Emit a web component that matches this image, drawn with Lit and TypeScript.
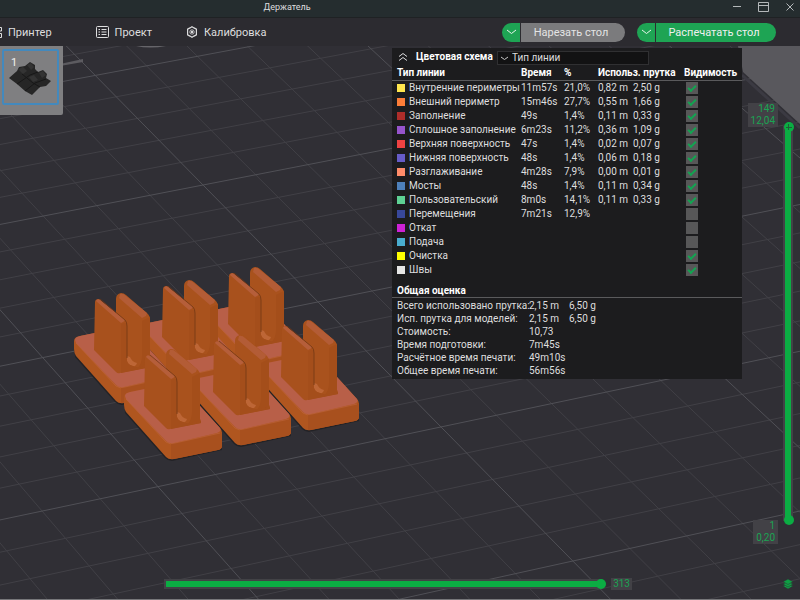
import { LitElement, html, svg, css, nothing } from "lit";
import { customElement } from "lit/decorators.js";

interface LineType {
  name: string;
  color: string;
  time?: string;
  percent?: string;
  length?: string;
  weight?: string;
  visible: boolean;
}

const LINE_TYPES: LineType[] = [
  { name: "Внутренние периметры", color: "#ffe64d", time: "11m57s", percent: "21,0%", length: "0,82 m", weight: "2,50 g", visible: true },
  { name: "Внешний периметр", color: "#fc7d38", time: "15m46s", percent: "27,7%", length: "0,55 m", weight: "1,66 g", visible: true },
  { name: "Заполнение", color: "#ad2d2a", time: "49s", percent: "1,4%", length: "0,11 m", weight: "0,33 g", visible: true },
  { name: "Сплошное заполнение", color: "#9654cc", time: "6m23s", percent: "11,2%", length: "0,36 m", weight: "1,09 g", visible: true },
  { name: "Верхняя поверхность", color: "#ee4242", time: "47s", percent: "1,4%", length: "0,02 m", weight: "0,07 g", visible: true },
  { name: "Нижняя поверхность", color: "#665cc7", time: "48s", percent: "1,4%", length: "0,06 m", weight: "0,18 g", visible: true },
  { name: "Разглаживание", color: "#ff8c69", time: "4m28s", percent: "7,9%", length: "0,00 m", weight: "0,01 g", visible: true },
  { name: "Мосты", color: "#4d80ba", time: "48s", percent: "1,4%", length: "0,11 m", weight: "0,34 g", visible: true },
  { name: "Пользовательский", color: "#5ed194", time: "8m0s", percent: "14,1%", length: "0,11 m", weight: "0,33 g", visible: true },
  { name: "Перемещения", color: "#38489b", time: "7m21s", percent: "12,9%", visible: false },
  { name: "Откат", color: "#cd22d6", visible: false },
  { name: "Подача", color: "#49adcf", visible: false },
  { name: "Очистка", color: "#ffff00", visible: true },
  { name: "Швы", color: "#e6e6e6", visible: true },
];

const TOTALS: [string, string, string][] = [
  ["Всего использовано прутка:", "2,15 m", "6,50 g"],
  ["Исп. прутка для моделей:", "2,15 m", "6,50 g"],
  ["Стоимость:", "10,73", ""],
  ["Время подготовки:", "7m45s", ""],
  ["Расчётное время печати:", "49m10s", ""],
  ["Общее время печати:", "56m56s", ""],
];

/** Perspective projection of a point on the build plate, in grid cells. */
function project(u: number, v: number): string {
  const w = 1 + 0.003 * u - 0.0065 * v;
  const x = (203 + 53.4 * u + 20.93 * v) / w;
  const y = (185 - 9.7 * u + 21.42 * v) / w;
  return `${x.toFixed(1)} ${y.toFixed(1)}`;
}

function gridPath(major: boolean): string {
  let d = "";
  for (let i = -25; i <= 35; i++) {
    if ((i % 5 === 0) !== major) continue;
    if (i <= 20) d += `M${project(i, -20)}L${project(i, 40)}`;
    d += `M${project(-25, i)}L${project(20, i)}`;
  }
  return d;
}

/** Holder copies, back to front. */
const COPIES: [number, number][] = [
  [84, -82], [18, -69], [-50, -56], [137, -29], [69, -14], [0, 0],
];

@customElement("plate-scene")
export class PlateScene extends LitElement {
  static styles = css`
    :host { display: block; }
    svg { display: block; width: 100%; height: 100%; }
    .minor { fill: none; stroke: #414046; stroke-width: 1; }
    .major { fill: none; stroke: #505056; stroke-width: 1; }
  `;

  private holder(x: number, y: number) {
    return svg`
      <g transform="translate(${x} ${y})">
        <path fill="#222226" d="M124 399 L175 386 L222 433 V450 L172 461 Q168 461 165 458 L125 413Z"/>
        <path fill="#b0561f" d="M124 397 Q124 393 130 392 L174 383 Q178 382 181 385 L220 428 Q222 430 222 433 V446 Q222 449 218 450 L174 459 Q169 460 166 457 L126 412 Q124 409 124 405Z"/>
        <path fill="#a8501e" d="M171 443 L222 432 V446 Q222 449 218 450 L174 459 Q172 459 171 459Z"/>
        <path fill="#b85f48" d="M125 396 Q125 393 130 392 L174 383 Q178 382 181 385 L220 428 Q222 431 217 433 L174 443 Q169 444 166 441 L126 399Z"/>
        <path fill="#a9521d" d="M166 355 Q166 350 171 349 Q174 349 176 351 L198 370 Q200 372 200 376 V419 L201 422 L185 426 L174 421 L166 412Z"/>
        <path fill="#a44e1a" d="M192 377 L200 373 V419 L201 422 L187 425 Q192 420 192 412Z"/>
        <path fill="#b35c36" d="M170 350 Q173 349 176 352 L197 369 L196 372 L192 374 L169 354Z"/>
        <path fill="#bd6636" d="M176 414 Q177 411 180 413 Q182 418 187 419 Q186 423 181 423 Q177 422 176 418Z"/>
        <path fill="#a8511d" d="M145 358 Q145 355 149 355 L175 377 Q177 379 177 382 V417 Q178 421 183 422 Q186 424 192 423 L201 421 L201 423 L170 429 Q168 430 166 428 L144 406Z"/>
        <path fill="#a44e1b" d="M171 380 L177 378 V417 Q178 421 183 422 Q186 424 192 423 L201 421 L201 423 L171 429Z"/>
        <path fill="#b55e3a" d="M146 357 Q147 354 150 356 L175 376 Q174 378 171 379Z"/>
        <path fill="none" stroke="#713714" stroke-width=".8" d="M150 355 L175 376 Q177 378 177 382 V414"/>
        <path fill="none" stroke="#c0673f" stroke-width=".6" d="M126 399 L166 442 Q170 445 175 443 L220 433"/>
      </g>`;
  }

  render() {
    return html`
      <svg viewBox="0 46 800 553" preserveAspectRatio="xMidYMid slice" aria-hidden="true">
        <path class="minor" d=${gridPath(false)} />
        <path class="major" d=${gridPath(true)} />
        <path fill="#59585d" d="M738 46H800V124L743 72Z" />
        <path fill="none" stroke="#3b3a42" stroke-width="3" d="M742 75L800 128" />
        <path fill="#5c5b60" d="M60 64L83 59V62L60 66Z" />
        <path fill="#66656a" d="M136 46H166Q150 49 136 46Z" />
        ${COPIES.map(([x, y]) => this.holder(x, y))}
      </svg>
    `;
  }
}

@customElement("legend-panel")
export class LegendPanel extends LitElement {
  static styles = css`
    :host {
      display: block;
      background: #1c1c1e;
      color: #dededf;
      font-size: 10px;
      line-height: 14px;
      padding-bottom: 2px;
    }
    .head { display: flex; align-items: center; height: 18px; padding-left: 6px; }
    .fold {
      border: 0; padding: 0; background: none; color: inherit;
      width: 10px; height: 12px; margin-right: 8px;
    }
    .fold svg { display: block; }
    .scheme { font-weight: 700; color: #fff; width: 81px; white-space: nowrap; }
    .pick { position: relative; width: 152px; }
    .pick select {
      appearance: none; display: block; box-sizing: border-box;
      width: 100%; height: 14px; margin-top: 2px; padding: 0 0 0 14px;
      border: 1px solid #303032; border-radius: 0; background: #121213;
      color: #dededf; font: inherit; line-height: 12px;
    }
    .pick svg { position: absolute; left: 3px; top: 7px; pointer-events: none; }
    table { width: 100%; table-layout: fixed; border-collapse: collapse; }
    th, td { padding: 0; text-align: left; white-space: nowrap; font-weight: 400; }
    thead th {
      font-weight: 700; color: #fff; height: 14px; line-height: 12px;
      border-bottom: 1px solid #5a5a5c;
    }
    thead th:first-child, tbody th { padding-left: 5px; }
    tbody tr { height: 14px; }
    .name { width: 129px; }
    .time { width: 43px; }
    .percent { width: 34px; }
    .length { width: 35px; }
    .weight { width: 51px; }
    .item { display: flex; align-items: center; }
    .swatch { width: 8px; height: 8px; margin-right: 4px; flex: none; }
    .tick {
      appearance: none; display: block; width: 12px; height: 12px;
      margin: 0 0 0 2px; background: #575758;
    }
    .tick:checked::after {
      content: ""; display: block; width: 8px; height: 5px;
      margin: 3px 0 0 2px; border: solid #12a551;
      border-width: 0 0 2px 2px; transform: rotate(-45deg);
      box-sizing: border-box;
    }
    h2 {
      margin: 7px 0 1px; padding: 0 5px; height: 13px;
      font-size: 10px; line-height: 13px; font-weight: 700; color: #fff;
      border-bottom: 1px solid #5a5a5c;
    }
    .totals tr { height: 13px; }
    .totals td, .totals th { line-height: 13px; }
    .label { width: 137px; }
    .amount { width: 40px; }
  `;

  private row(t: LineType, i: number) {
    return html`
      <tr>
        <th scope="row">
          <label class="item" for="show-${i}">
            <span class="swatch" style="background:${t.color}"></span>${t.name}
          </label>
        </th>
        <td>${t.time ?? nothing}</td>
        <td>${t.percent ?? nothing}</td>
        <td>${t.length ?? nothing}</td>
        <td>${t.weight ?? nothing}</td>
        <td><input class="tick" type="checkbox" id="show-${i}" .checked=${t.visible} /></td>
      </tr>
    `;
  }

  render() {
    return html`
      <div class="head">
        <button class="fold" aria-label="Свернуть">
          <svg width="10" height="12" fill="none" stroke="currentColor" viewBox="0 0 10 12">
            <path d="M1 5.5L5 2.5L9 5.5M1 9.5L5 6.5L9 9.5" />
          </svg>
        </button>
        <label class="scheme" for="scheme">Цветовая схема</label>
        <div class="pick">
          <select id="scheme"><option>Тип линии</option></select>
          <svg width="9" height="5" fill="none" stroke="#c8c8c8" viewBox="0 0 9 5">
            <path d="M1 1L4.500 3.500L8 1" />
          </svg>
        </div>
      </div>
      <table>
        <colgroup>
          <col class="name" /><col class="time" /><col class="percent" />
          <col class="length" /><col class="weight" /><col />
        </colgroup>
        <thead>
          <tr>
            <th scope="col">Тип линии</th>
            <th scope="col">Время</th>
            <th scope="col">%</th>
            <th scope="col" colspan="2">Использ. прутка</th>
            <th scope="col">Видимость</th>
          </tr>
        </thead>
        <tbody>${LINE_TYPES.map((t, i) => this.row(t, i))}</tbody>
      </table>
      <h2>Общая оценка</h2>
      <table class="totals">
        <colgroup><col class="label" /><col class="amount" /><col /></colgroup>
        <tbody>
          ${TOTALS.map(([label, a, b]) => html`
            <tr><th scope="row">${label}</th><td>${a}</td><td>${b}</td></tr>
          `)}
        </tbody>
      </table>
    `;
  }
}

@customElement("app-root")
export class AppRoot extends LitElement {
  static styles = css`
    :host {
      display: flex; flex-direction: column; box-sizing: border-box;
      min-height: 100vh; background: #302f35; color: #dededf;
      font-family: Roboto, "Noto Sans", sans-serif; font-size: 11px;
      border-bottom: 1px solid #77777a; overflow: hidden;
    }
    button { font: inherit; color: inherit; border: 0; padding: 0; background: none; }
    svg { display: block; }

    .titlebar {
      display: grid; grid-template-columns: 1fr auto; align-items: start;
      height: 18px; background: #252d2f; border-bottom: 1px solid #1f2224;
      box-sizing: border-box;
    }
    .title { margin: 0; padding-left: 36%; font-size: 9px; font-weight: 400; line-height: 14px; }
    .window { display: flex; gap: 16px; padding: 2px 5px 0 0; color: #b4b8ba; }

    .toolbar {
      display: flex; align-items: center; height: 28px;
      background: #2c2b30; padding-right: 24px;
    }
    nav { display: flex; align-items: center; flex: 1; }
    nav button { display: flex; align-items: center; gap: 6px; margin-right: 44px; }
    nav button + button { margin-right: 34px; }
    .actions { display: flex; gap: 12px; }
    .split { display: flex; gap: 1px; }
    .split button { height: 19px; color: #f0f0f0; background: #1ea454; }
    .split .drop { width: 18px; border-radius: 10px 0 0 10px; display: grid; place-items: center; }
    .split .go { border-radius: 0 10px 10px 0; width: 104px; padding-right: 4px; }
    .split .slice { background: #7b7b7d; color: #e4e4e4; }
    .split .print { width: 120px; }

    .stage { position: relative; flex: 1; display: flex; flex-direction: column; }
    plate-scene { position: absolute; inset: 0; }
    .upper, .lower { position: relative; display: flex; }
    .upper { flex: 1; justify-content: space-between; align-items: flex-start; }

    .plate {
      display: block; position: relative; width: 63px; height: 69px;
      padding: 3px 4px 10px 2px; box-sizing: border-box;
      background: #7f7f81; border-radius: 0 0 2px 0;
    }
    .frame { display: block; height: 100%; box-sizing: border-box; border: 2px solid #4389bd; border-radius: 2px; }
    .number { position: absolute; left: 11px; top: 10px; color: #f0f0f0; line-height: 14px; }

    .side { display: flex; align-items: stretch; align-self: stretch; }
    legend-panel { width: 350px; margin: 2px 6px 0 0; align-self: flex-start; }
    .rail { display: flex; gap: 4px; padding: 57px 6px 0 0; }
    .marks { display: flex; flex-direction: column; justify-content: space-between; align-items: flex-end; width: 30px; }
    .mark {
      display: block; box-sizing: border-box; padding: 0 3px; text-align: right;
      background: #424146; color: #1aa453; font-size: 10px; line-height: 12px;
    }
    input[type="range"] { grid-area: 1 / 1; appearance: none; margin: 0; background: none; }
    input[type="range"]::-webkit-slider-thumb {
      appearance: none; width: 10px; height: 10px; border-radius: 50%;
      background: #0bad43; pointer-events: auto;
    }
    .bar { grid-area: 1 / 1; background: #0bad43; outline: 2px solid #424246; }
    .layers { display: grid; width: 12px; margin: 19px 0; }
    .layers input {
      writing-mode: vertical-lr; direction: rtl;
      width: 12px; height: 100%; pointer-events: none;
    }
    .layers .bar { width: 6px; margin: 6px auto; }
    .layers input::-webkit-slider-thumb { margin-left: 1px; }
    .layers .high::-webkit-slider-thumb {
      background:
        linear-gradient(#1d5f36, #1d5f36) center / 6px 1px no-repeat,
        linear-gradient(#1d5f36, #1d5f36) center / 1px 6px no-repeat,
        #0bad43;
    }

    .lower { height: 55px; padding-top: 24px; box-sizing: border-box; align-items: center; }
    .lower::before { content: ""; width: 20.5%; }
    .moves { flex: 1; display: flex; align-items: center; gap: 5px; }
    .range { flex: 1; display: grid; align-items: center; }
    .range input { width: 100%; height: 10px; }
    .range .bar { height: 6px; margin: 0 6px 0 2px; }
    .moves .mark { padding: 0 2px; }
    .tail { width: 21%; display: flex; justify-content: flex-end; padding-right: 7px; box-sizing: border-box; }
  `;

  private chevron() {
    return html`<svg width="11" height="6" viewBox="0 0 11 6" fill="none" stroke="#e8f5ec">
      <path d="M1 1L5.500 4.500L10 1" />
    </svg>`;
  }

  render() {
    return html`
      <header class="titlebar">
        <h1 class="title">Держатель</h1>
        <div class="window">
          <button aria-label="Свернуть окно">
            <svg width="10" height="10" stroke="currentColor" viewBox="0 0 10 10"><path d="M1 4.500H9" /></svg>
          </button>
          <button aria-label="Развернуть окно">
            <svg width="11" height="10" fill="none" stroke="currentColor" viewBox="0 0 11 10">
              <path d="M.5 .5H10.500V9.500H.5ZM.5 3.500H10.500" />
            </svg>
          </button>
          <button aria-label="Закрыть окно">
            <svg width="10" height="10" stroke="currentColor" viewBox="0 0 10 10"><path d="M1.500 1.500L8.500 8.500M8.500 1.500L1.500 8.500" /></svg>
          </button>
        </div>
      </header>

      <div class="toolbar">
        <nav>
          <button>
            <svg width="2" height="12" viewBox="0 0 2 12" fill="none" stroke="currentColor">
              <path d="M0 1.500H1.500V5H0M0 7.500H1.500V11.500H0" />
            </svg>Принтер
          </button>
          <button>
            <svg width="13" height="12" viewBox="0 0 13 12" fill="none" stroke="currentColor">
              <rect x=".5" y=".5" width="12" height="11" rx="1" />
              <path d="M2.500 3.500H4M5.500 3.500H10.500M2.500 6H4M5.500 6H10.500M2.500 8.500H4M5.500 8.500H10.500" />
            </svg>Проект
          </button>
          <button>
            <svg width="12" height="12" viewBox="0 0 12 12" fill="none" stroke="currentColor">
              <path d="M6 .7L8 1.900L10.400 3.200V8.800L8 10.100L6 11.300L4 10.100L1.600 8.800V3.200L4 1.900Z" stroke-width="1.200" />
              <circle cx="6" cy="6" r="2.200" stroke-width=".8" /><circle cx="6" cy="6" r="1.200" fill="currentColor" stroke="none" />
            </svg>Калибровка
          </button>
        </nav>
        <div class="actions">
          <div class="split">
            <button class="drop" aria-label="Варианты нарезки">${this.chevron()}</button>
            <button class="go slice">Нарезать стол</button>
          </div>
          <div class="split">
            <button class="drop" aria-label="Варианты печати">${this.chevron()}</button>
            <button class="go print">Распечатать стол</button>
          </div>
        </div>
      </div>

      <main class="stage">
        <plate-scene></plate-scene>
        <div class="upper">
          <button class="plate" aria-label="Стол 1">
            <span class="frame">
              <svg width="53" height="52" viewBox="4 51 53 52">
                <path fill="#262626" d="M9 78L17 71L19 67L25 66L30 62L35 65V69L38 72L43 70L47 74L46 78L51 81L46 86L40 87L32 95L25 91L17 84Z" />
                <path fill="#343434" d="M18 69L23 67L27 71L23 74ZM27 65L31 63L34 67L31 70ZM39 73L43 71L46 75L42 78ZM29 77L34 75L38 80L33 82Z" />
                <path fill="none" stroke="#171717" d="M17 84L30 75L38 72M22 74L33 83L40 87M25 91L35 83L46 79" />
              </svg>
            </span>
            <span class="number">1</span>
          </button>
          <div class="side">
            <legend-panel></legend-panel>
            <div class="rail">
              <div class="marks">
                <output class="mark">149<br />12,04</output>
                <output class="mark">1<br />0,20</output>
              </div>
              <div class="layers">
                <span class="bar"></span>
                <input type="range" min="1" max="149" value="1" aria-label="Нижний слой" />
                <input class="high" type="range" min="1" max="149" value="149" aria-label="Верхний слой" />
              </div>
            </div>
          </div>
        </div>
        <div class="lower">
          <div class="moves">
            <div class="range">
              <span class="bar"></span>
              <input id="moves" type="range" min="1" max="313" value="313" aria-label="Перемещения" />
            </div>
            <output class="mark" for="moves">313</output>
          </div>
          <div class="tail">
            <button aria-label="Слои">
              <svg width="10" height="10" viewBox="0 0 10 10" fill="#0f9f44" stroke="#302f35" stroke-width=".5">
                <path d="M5 4.500L10 7L5 10L0 7Z" /><path d="M5 2.500L10 5L5 8L0 5Z" /><path d="M5 0L10 2.700L5 5.500L0 2.700Z" />
              </svg>
            </button>
          </div>
        </div>
      </main>
    `;
  }
}
